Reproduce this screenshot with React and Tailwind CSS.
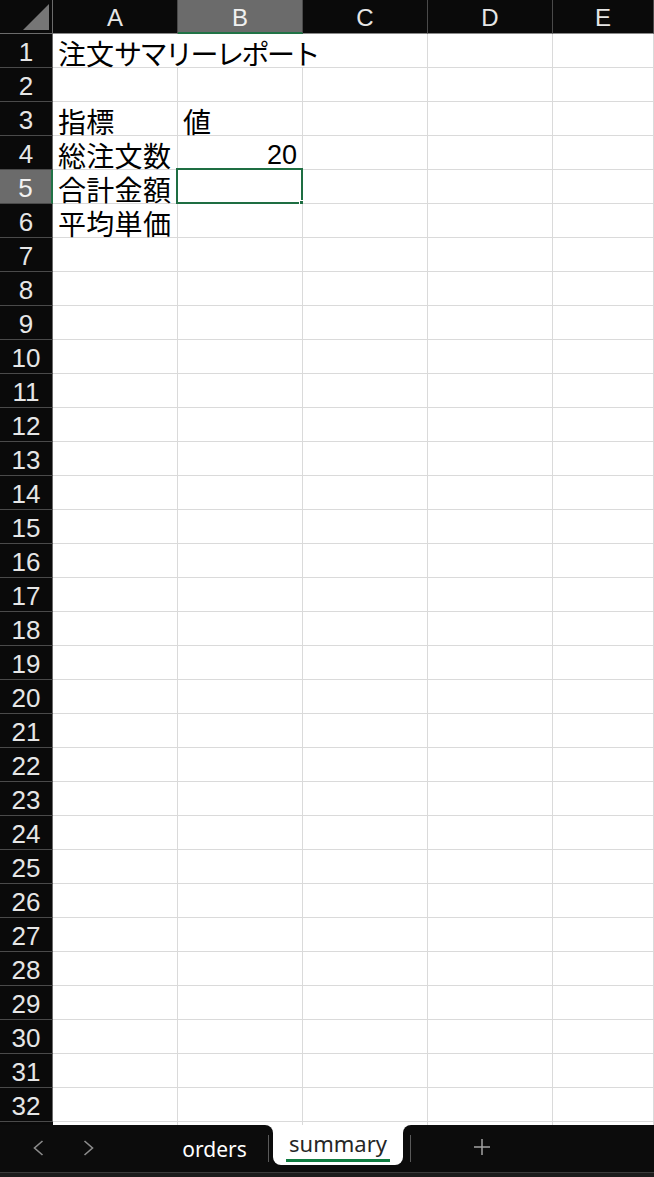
const COLS = ["A", "B", "C", "D", "E"]
const ROW_COUNT = 32

// cell contents keyed by row number
const cells = {
  3: { A: "指標", B: "値" },
  4: { A: "総注文数", B: "20" },
  5: { A: "合計金額" },
  6: { A: "平均単価" },
}

const jp = "font-['Noto_Sans_CJK_JP','Noto_Sans',sans-serif]"

function CornerCell() {
  return (
    <div className="relative h-[34px] border-r border-b border-[#6b6b6b] bg-[#0a0a0a]">
      <svg className="absolute left-[23px] top-[4px]" width="27" height="26" viewBox="0 0 27 26">
        <polygon points="26,0 26,26 0,26" fill="#767676" />
      </svg>
    </div>
  )
}

function ColHeader({ col }) {
  const active = col === "B"
  return (
    <div
      className={
        active
          ? "flex h-[34px] items-center justify-center border-r border-[#4a4a4a] border-b-2 border-b-[#217346] bg-[#6b6b6b] pt-[4px] font-['Liberation_Sans',sans-serif] text-[24px] text-[#f0f0f0]"
          : "flex h-[34px] items-center justify-center border-r border-[#4a4a4a] border-b border-b-[#8a8a8a] bg-[#0a0a0a] pt-[3px] font-['Liberation_Sans',sans-serif] text-[24px] text-[#e6e6e6]"
      }
    >
      {col}
    </div>
  )
}

function RowHeader({ n }) {
  const active = n === 5
  return (
    <div
      className={
        active
          ? "flex h-[34px] items-center justify-center border-r-2 border-r-[#217346] border-b border-b-[#4a4a4a] bg-[#6b6b6b] pt-[3px] font-['Liberation_Sans',sans-serif] text-[26px] text-[#f2f2f2]"
          : "flex h-[34px] items-center justify-center border-r border-r-[#6b6b6b] border-b border-b-[#4a4a4a] bg-[#0a0a0a] pt-[3px] font-['Liberation_Sans',sans-serif] text-[26px] text-[#e6e6e6]"
      }
    >
      {n}
    </div>
  )
}

function Cell({ children, right, selected }) {
  return (
    <div
      className={
        "relative flex h-[34px] items-center border-r border-b border-[#dadada] bg-white pt-[4px] leading-[30px] text-black " +
        (right
          ? "justify-end pr-[5px] font-['Liberation_Sans',sans-serif] text-[27px]"
          : `whitespace-nowrap pl-[5px] ${jp} text-[28px] tracking-[0.3px]`)
      }
    >
      {children}
      {selected && (
        <>
          <div className="absolute -left-[2px] -top-[2px] h-[36px] w-[127px] border-2 border-[#1e6e42]" />
          <div className="absolute -right-[4px] -bottom-[4px] h-[7px] w-[7px] border border-white bg-[#1e6e42]" />
        </>
      )}
    </div>
  )
}

function Sheet() {
  const rows = []
  for (let n = 1; n <= ROW_COUNT; n++) {
    rows.push(<RowHeader key={"h" + n} n={n} />)
    if (n === 1) {
      // title spills over B and C
      rows.push(
        <div
          key="title"
          className={`col-span-3 flex h-[34px] items-center whitespace-nowrap border-r border-b border-[#dadada] bg-white pt-[4px] pl-[5px] leading-[30px] ${jp} text-[28px] text-black`}
        >
          注文<span className="tracking-[-2.5px]">サマリーレポート</span>
        </div>
      )
      rows.push(<Cell key="D1" />, <Cell key="E1" />)
      continue
    }
    const data = cells[n] || {}
    COLS.forEach((c) => {
      rows.push(
        <Cell key={c + n} right={n === 4 && c === "B"} selected={n === 5 && c === "B"}>
          {data[c]}
        </Cell>
      )
    })
  }
  return (
    <div className="grid grid-cols-[53px_125px_125px_125px_125px_101px]">
      <CornerCell />
      {COLS.map((c) => (
        <ColHeader key={c} col={c} />
      ))}
      {rows}
      {/* sliver of row 33 */}
      <div className="h-[3px] bg-[#0a0a0a]" />
      {COLS.map((c) => (
        <div key={"s" + c} className="h-[3px] border-r border-[#dadada] bg-white" />
      ))}
    </div>
  )
}

function Chevron({ flip }) {
  return (
    <svg width="11" height="16" viewBox="0 0 11 16" className="mt-[15px]">
      <polyline
        points={flip ? "1.5,1 9.5,8 1.5,15" : "9.5,1 1.5,8 9.5,15"}
        fill="none"
        stroke="#8c8c8c"
        strokeWidth="1.6"
      />
    </svg>
  )
}

function TabBar() {
  return (
    <>
      <div className="flex h-[47px] bg-white font-['Noto_Sans',sans-serif]">
        <div className="flex w-[273px] rounded-tr-[8px] bg-[#0c0c0c] pl-[33px]">
          <Chevron />
          <div className="ml-[39px]">
            <Chevron flip />
          </div>
          <div className="ml-[67px] w-[107px] pt-[9px] text-center text-[21px] text-white">orders</div>
          <div className="mt-[10px] h-[27px] w-px bg-[#5a5a5a]" />
        </div>
        <div className="w-[130px] bg-[#0c0c0c]">
          <div className="flex h-[40px] justify-center rounded-b-[8px] bg-white">
            <div className="h-[37px] border-b-[3px] border-[#107c41] px-[3px] pt-[3px] text-[22px] leading-[30px] text-[#262626]">
              summary
            </div>
          </div>
        </div>
        <div className="flex flex-1 rounded-tl-[8px] bg-[#0c0c0c] pl-[7px]">
          <div className="mt-[10px] h-[27px] w-px bg-[#5a5a5a]" />
          <svg width="18" height="18" viewBox="0 0 18 18" className="mt-[13px] ml-[62px]">
            <path d="M9 1v16M1 9h16" stroke="#a3a3a3" strokeWidth="1.5" />
          </svg>
        </div>
      </div>
      <div className="h-px bg-[#3c3c3c]" />
      <div className="h-[4px] bg-[#1c1c1c]" />
    </>
  )
}

export default function App() {
  return (
    <div className="h-[1177px] w-[654px] overflow-hidden bg-white">
      <Sheet />
      <TabBar />
    </div>
  )
}
